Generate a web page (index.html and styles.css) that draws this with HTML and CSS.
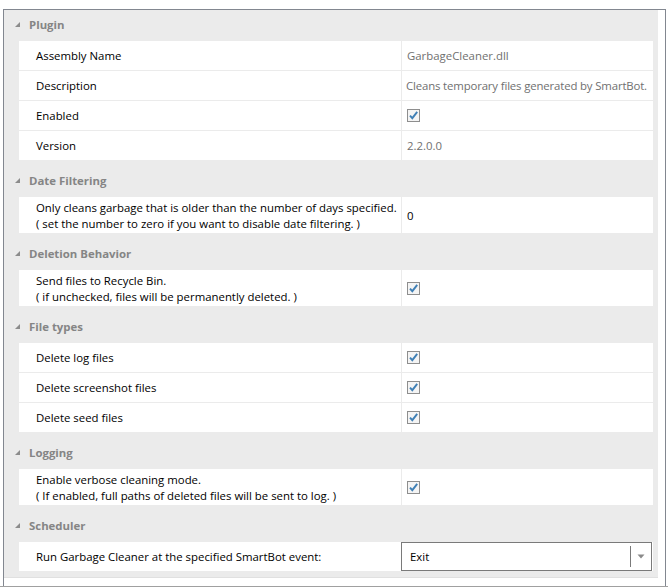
FILE: index.html
```html
<!DOCTYPE html>
<html>
<head>
<meta charset="utf-8">
<link rel="stylesheet" href="styles.css">
</head>
<body>
<div class="frame">
  <div class="panel">
    <div class="grid">
      <section class="group">
        <div class="cat"><span class="tri"></span><span class="cat-name">Plugin</span></div>
        <div class="row"><div class="name">Assembly Name</div><div class="val ro">GarbageCleaner.dll</div></div>
        <div class="row"><div class="name">Description</div><div class="val ro fit">Cleans temporary files generated by SmartBot.</div></div>
        <div class="row"><div class="name">Enabled</div><div class="val"><span class="chk"><svg width="13" height="13" viewBox="0 0 13 13"><path d="M3 6.6 L5.3 9.2 L10.2 2.8" fill="none" stroke="#3f7fb5" stroke-width="1.9"/></svg></span></div></div>
        <div class="row"><div class="name">Version</div><div class="val ro">2.2.0.0</div></div>
      </section>
      <section class="group">
        <div class="cat"><span class="tri"></span><span class="cat-name">Date Filtering</span></div>
        <div class="row tall"><div class="name">Only cleans garbage that is older than the number of days specified.<br>( set the number to zero if you want to disable date filtering. )</div><div class="val">0</div></div>
      </section>
      <section class="group">
        <div class="cat"><span class="tri"></span><span class="cat-name">Deletion Behavior</span></div>
        <div class="row tall"><div class="name">Send files to Recycle Bin.<br>( if unchecked, files will be permanently deleted. )</div><div class="val"><span class="chk"><svg width="13" height="13" viewBox="0 0 13 13"><path d="M3 6.6 L5.3 9.2 L10.2 2.8" fill="none" stroke="#3f7fb5" stroke-width="1.9"/></svg></span></div></div>
      </section>
      <section class="group">
        <div class="cat"><span class="tri"></span><span class="cat-name">File types</span></div>
        <div class="row"><div class="name">Delete log files</div><div class="val"><span class="chk"><svg width="13" height="13" viewBox="0 0 13 13"><path d="M3 6.6 L5.3 9.2 L10.2 2.8" fill="none" stroke="#3f7fb5" stroke-width="1.9"/></svg></span></div></div>
        <div class="row"><div class="name">Delete screenshot files</div><div class="val"><span class="chk"><svg width="13" height="13" viewBox="0 0 13 13"><path d="M3 6.6 L5.3 9.2 L10.2 2.8" fill="none" stroke="#3f7fb5" stroke-width="1.9"/></svg></span></div></div>
        <div class="row"><div class="name">Delete seed files</div><div class="val"><span class="chk"><svg width="13" height="13" viewBox="0 0 13 13"><path d="M3 6.6 L5.3 9.2 L10.2 2.8" fill="none" stroke="#3f7fb5" stroke-width="1.9"/></svg></span></div></div>
      </section>
      <section class="group">
        <div class="cat"><span class="tri"></span><span class="cat-name">Logging</span></div>
        <div class="row tall"><div class="name">Enable verbose cleaning mode.<br>( If enabled, full paths of deleted files will be sent to log. )</div><div class="val"><span class="chk"><svg width="13" height="13" viewBox="0 0 13 13"><path d="M3 6.6 L5.3 9.2 L10.2 2.8" fill="none" stroke="#3f7fb5" stroke-width="1.9"/></svg></span></div></div>
      </section>
      <section class="group">
        <div class="cat"><span class="tri"></span><span class="cat-name">Scheduler</span></div>
        <div class="row"><div class="name">Run Garbage Cleaner at the specified SmartBot event:</div><div class="val combo-cell"><div class="combo"><span class="combo-text">Exit</span><span class="combo-sep"></span><span class="combo-btn"><svg width="8" height="5" viewBox="0 0 8 5"><path d="M0.5 0.5 L7.5 0.5 L4 4.5 Z" fill="#8a8a8a"/></svg></span></div></div></div>
      </section>
    </div>
  </div>
  <div class="bottom-line"></div>
</div>
</body>
</html>
```

FILE: styles.css
```css
html, body {
  margin: 0;
  padding: 0;
  background: #ffffff;
}
body {
  font-family: "Open Sans", "Noto Sans", sans-serif;
  font-size: 11.4px;
  color: #000000;
  width: 668px;
  height: 588px;
  overflow: hidden;
}
.frame {
  padding-top: 9px;
}
.panel {
  margin-left: 3px;
  width: 661px;
  height: 576px;
  border: 1px solid #828790;
  border-bottom: none;
  background: #ffffff;
}
.grid {
  width: 654px;
  background: #ebebeb;
  border-bottom: 1px solid #e0e0e0;
}
.group {
  padding-bottom: 6px;
}
.cat {
  height: 31px;
  display: flex;
  align-items: center;
  padding-bottom: 3px;
  box-sizing: border-box;
}
.tri {
  width: 0;
  height: 0;
  margin-left: 11px;
  margin-right: 9px;
  border-style: solid;
  border-width: 0 0 5px 5px;
  border-color: transparent transparent #8c8c8c transparent;
}
.cat-name {
  font-weight: 700;
  color: #858585;
}
.row {
  margin-left: 15px;
  width: 634px;
  height: 29px;
  background: #ffffff;
  display: grid;
  grid-template-columns: 382px 251px;
  column-gap: 0;
}
.row + .row {
  border-top: 1px solid #ebebeb;
}
.row.tall {
  height: 36px;
}
.name {
  padding-left: 17px;
  display: flex;
  align-items: center;
  line-height: 16px;
  white-space: nowrap;
  overflow: hidden;
}
.row.tall .name {
  display: block;
  padding-top: 3px;
}
.val {
  border-left: 1px solid #ebebeb;
  padding-left: 5px;
  display: flex;
  align-items: center;
  white-space: nowrap;
  overflow: hidden;
}
.val.ro {
  color: #707070;
}
.val.fit {
  letter-spacing: -0.15px;
  padding-left: 4px;
}
.chk {
  width: 11px;
  height: 11px;
  border: 1px solid #8e8e8e;
  background: #f4f4f4;
  display: flex;
  align-items: center;
  justify-content: center;
  margin-left: 0;
}
.chk svg {
  display: block;
  flex: none;
}
.combo-cell {
  padding-left: 0;
  border-left: none;
}
.combo {
  width: 251px;
  height: 29px;
  box-sizing: border-box;
  border: 1px solid #7a7a7a;
  display: flex;
  align-items: center;
  background: #ffffff;
}
.combo-text {
  flex: 1;
  padding-left: 8px;
}
.combo-sep {
  width: 1px;
  height: 21px;
  background: #7a7a7a;
}
.combo-btn {
  width: 20px;
  display: flex;
  justify-content: center;
  align-items: center;
}
.bottom-line {
  height: 1px;
  background: #a0a0a0;
}
```
